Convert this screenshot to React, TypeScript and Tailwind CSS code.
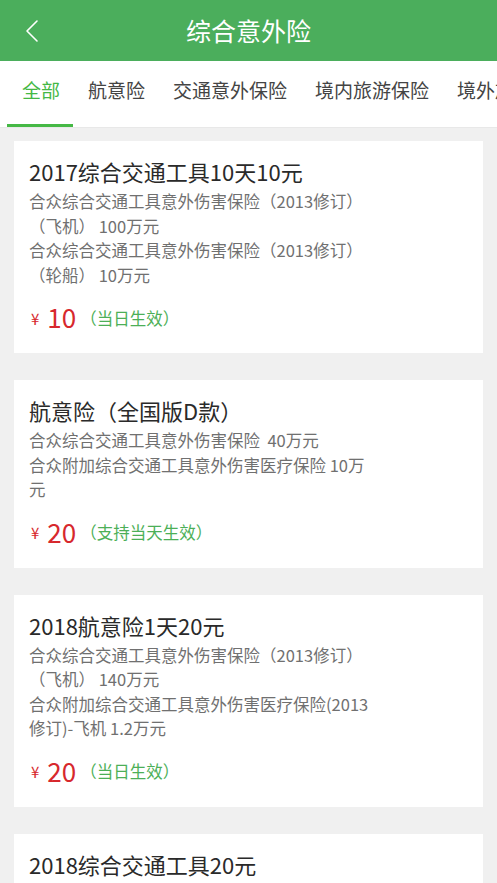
import React from "react";

const font = { fontFamily: '"Noto Sans CJK SC", "Noto Sans", Roboto, sans-serif' };

type Card = {
  title: string;
  lines: string[];
  price: string;
  note: string;
};

const cards: Card[] = [
  {
    title: "2017综合交通工具10天10元",
    lines: [
      "合众综合交通工具意外伤害保险（2013修订）（飞机） 100万元",
      "合众综合交通工具意外伤害保险（2013修订）（轮船） 10万元",
    ],
    price: "10",
    note: "（当日生效）",
  },
  {
    title: "航意险（全国版D款）",
    lines: ["合众综合交通工具意外伤害保险\u00a0 40万元", "合众附加综合交通工具意外伤害医疗保险 10万元"],
    price: "20",
    note: "（支持当天生效）",
  },
  {
    title: "2018航意险1天20元",
    lines: [
      "合众综合交通工具意外伤害保险（2013修订）（飞机） 140万元",
      "合众附加综合交通工具意外伤害医疗保险(2013修订)-飞机 1.2万元",
    ],
    price: "20",
    note: "（当日生效）",
  },
  {
    title: "2018综合交通工具20元",
    lines: ["合众综合交通工具意外伤害保险（2013修订）（飞机） 100万元"],
    price: "20",
    note: "（当日生效）",
  },
];

const tabs = ["全部", "航意险", "交通意外保险", "境内旅游保险", "境外旅游保险"];

export default function App() {
  return (
    <div className="w-[497px] h-[883px] overflow-hidden bg-[#f0f0f0] flex flex-col" style={font}>
      <header className="h-[61px] bg-[#4bae5c] flex items-center relative shrink-0">
        <svg className="absolute left-[24px] top-[19px]" width="16" height="24" viewBox="0 0 16 24" fill="none">
          <path d="M13 2 L3 12 L13 22" stroke="white" strokeWidth="1.6" strokeLinecap="round" strokeLinejoin="round" />
        </svg>
        <h1 className="w-full text-center text-white text-[25px] leading-none">综合意外险</h1>
      </header>
      <nav className="h-[67px] bg-white flex shrink-0 overflow-hidden whitespace-nowrap border-b border-[#e8e8e8]">
        {tabs.map((t, i) => (
          <div
            key={t}
            className={`relative shrink-0 pt-[17px] text-[19px] leading-[24px] ${
              i === 0 ? "pl-[22px] pr-[14px] text-[#45b845]" : "px-[14px] text-[#444]"
            }`}
          >
            {t}
            {i === 0 && <span className="absolute left-[7px] w-[66px] bottom-[0px] h-[3px] bg-[#45b845]" />}
          </div>
        ))}
      </nav>
      <main className="flex flex-col gap-[27px] pt-[13px] px-[14px]">
        {cards.map((c, i) => (
          <section key={i} className="bg-white pt-[16px] pb-[19px] px-[15px] shrink-0">
            <h2 className="text-[22px] leading-[28px] text-[#2a2a2a]">{c.title}</h2>
            <div className="mt-[4px] w-[346px] text-[16.5px] leading-[24.5px] text-[#707070]">
              {c.lines.map((l, j) => (
                <p key={j}>{l}</p>
              ))}
            </div>
            <div className="mt-[13px] h-[34px] flex items-center">
              <span className="text-[15px] text-[#d7282d] ml-[2px] mt-[4px]">¥</span>
              <span className="text-[26px] text-[#d7282d] ml-[8px] leading-none">{c.price}</span>
              <span className="text-[16.5px] text-[#4caf57] ml-[4px] mt-[2px]">{c.note}</span>
            </div>
          </section>
        ))}
      </main>
    </div>
  );
}
